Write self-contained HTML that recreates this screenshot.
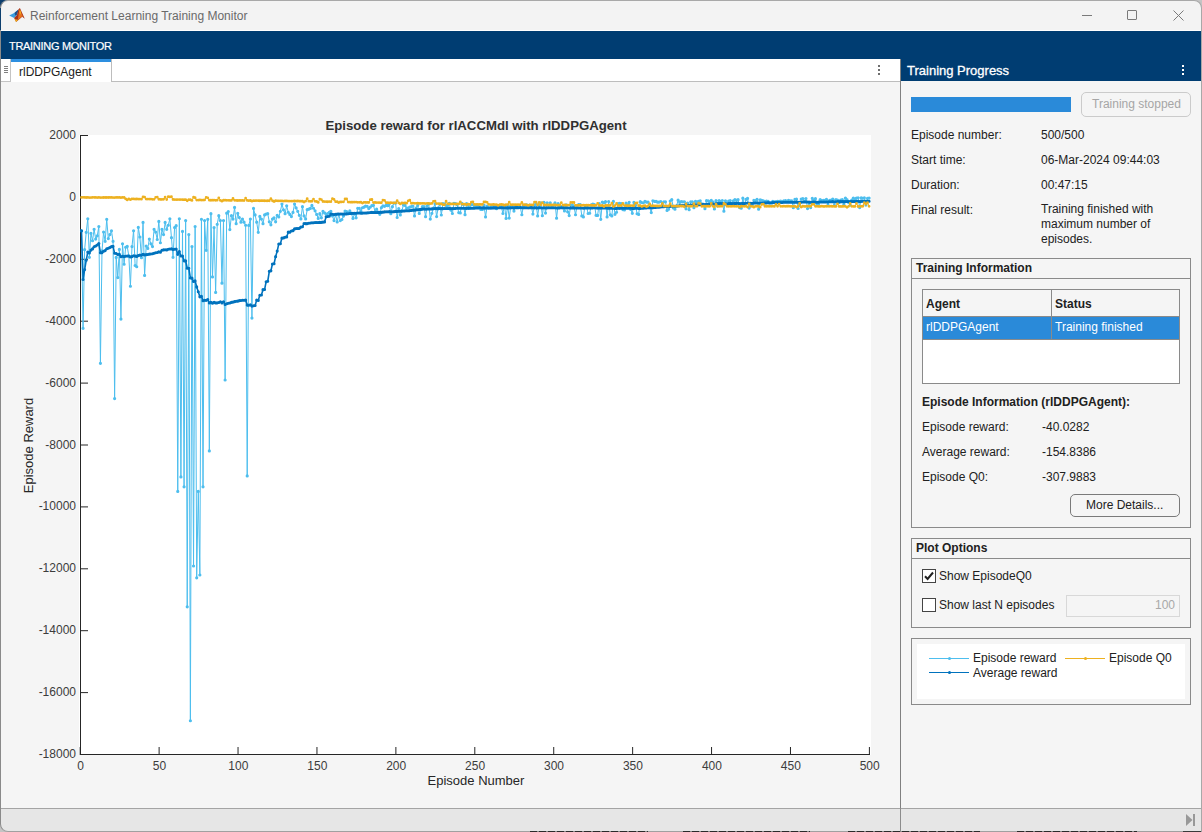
<!DOCTYPE html>
<html><head><meta charset="utf-8">
<style>
*{margin:0;padding:0;box-sizing:border-box}
html,body{width:1202px;height:832px;overflow:hidden;background:#f3f3f3;font-family:"Liberation Sans",sans-serif;color:#212121}
.a{position:absolute;white-space:nowrap}
#titlebar{position:absolute;left:0;top:0;width:1202px;height:31px;background:#f3f3f3}
#tstrip{position:absolute;left:1px;top:31px;width:1200px;height:28px;background:#003d72}
.lbl{position:absolute;font-size:12px;line-height:14px;color:#212121;white-space:nowrap}
</style></head><body>
<!-- window frame -->
<div class="a" style="left:0;top:0;width:1202px;height:832px;background:#c4c4c4"></div>
<div class="a" style="left:0;top:0;width:12px;height:30px;background:#0d3f6e"></div>
<div class="a" style="left:0;top:0;width:1202px;height:832px;background:#f3f3f3;border:1px solid #a8a8a8;border-left-color:#8a8a8a;border-radius:8px 8px 0 0"></div>
<div class="a" style="left:0;top:8px;width:1px;height:22px;background:#0d3f6e"></div>
<!-- title -->
<svg class="a" style="left:8px;top:7px" width="18" height="16" viewBox="0 0 18 16">
 <polygon points="1.2,8.5 6.6,5.7 10.4,2.5 9,8 6.1,10.9" fill="#3a9ee0"/>
 <polygon points="6.6,5.7 10.4,2.5 9.2,7.6 7.2,8.4" fill="#1f4f8a"/>
 <polygon points="10.4,2.5 11.9,1 16.8,11.7 14.2,9.7 8.1,14.9 6.1,10.9 9,8" fill="#a8321a"/>
 <polygon points="11.9,2.5 15.2,10.2 14,9.6 9.8,13.2 10.6,7" fill="#e5701f"/>
 <polygon points="11.9,2.2 13.2,6 12.2,7.4 11.3,4.8" fill="#f4ad22"/>
 <polygon points="6.6,12.2 8.1,14.9 10,12.8 8.4,12.4" fill="#f4b51e"/>
</svg>
<div class="a" style="left:30px;top:9px;font-size:12px;line-height:14px;color:#6a6a6a">Reinforcement Learning Training Monitor</div>
<!-- window controls -->
<div class="a" style="left:1082px;top:15px;width:10px;height:1px;background:#7a7a7a"></div>
<div class="a" style="left:1127px;top:10px;width:10px;height:10px;border:1px solid #7a7a7a;border-radius:1px"></div>
<svg class="a" style="left:1173px;top:10px" width="11" height="11" viewBox="0 0 11 11"><path d="M0.5 0.5L10.5 10.5M10.5 0.5L0.5 10.5" stroke="#7a7a7a" stroke-width="1"/></svg>
<!-- toolstrip -->
<div class="a" style="left:1px;top:30px;width:1200px;height:1px;background:#ffffff"></div>
<div class="a" style="left:1px;top:31px;width:1200px;height:28px;background:#003d72"></div>
<div class="a" style="left:9px;top:40px;font-size:11px;line-height:13px;letter-spacing:-0.3px;color:#fff;-webkit-text-stroke:0.2px #fff">TRAINING MONITOR</div>

<!-- left doc area -->
<div class="a" style="left:1px;top:82px;width:899px;height:726px;background:#f5f5f5"></div>
<div class="a" style="left:1px;top:59px;width:899px;height:23px;background:#fff"></div>
<div class="a" style="left:111px;top:81px;width:789px;height:1px;background:#bdbdbd"></div>
<div class="a" style="left:111px;top:59px;width:1px;height:23px;background:#bdbdbd"></div>
<div class="a" style="left:1px;top:59px;width:10px;height:23px;background:#fff;border-right:1px solid #c4c4c4;border-bottom:1px solid #c4c4c4"></div>
<div class="a" style="left:4px;top:66px;width:4px;height:1px;background:#808080"></div>
<div class="a" style="left:4px;top:68px;width:4px;height:1px;background:#808080"></div>
<div class="a" style="left:4px;top:70px;width:4px;height:1px;background:#808080"></div>
<div class="a" style="left:4px;top:72px;width:4px;height:1px;background:#808080"></div>
<div class="a" style="left:11px;top:59px;width:100px;height:3px;background:#2d8fe0"></div>
<div class="a" style="left:19px;top:65px;font-size:12px;line-height:14px;color:#212121">rlDDPGAgent</div>
<div class="a" style="left:878px;top:65px;width:2px;height:2px;background:#6e6e6e"></div>
<div class="a" style="left:878px;top:69px;width:2px;height:2px;background:#6e6e6e"></div>
<div class="a" style="left:878px;top:73px;width:2px;height:2px;background:#6e6e6e"></div>
<div class="a" style="left:900px;top:59px;width:1px;height:772px;background:#808080"></div>

<svg class="a" style="left:0;top:0" width="1202" height="832" viewBox="0 0 1202 832">
<rect x="79" y="135" width="792" height="620" fill="#fff"/>
<path d="M80.5 135 V755 M80 754.5 H870 M80 135.50 h8 M80 197.40 h8 M80 259.30 h8 M80 321.20 h8 M80 383.10 h8 M80 445.00 h8 M80 506.90 h8 M80 568.80 h8 M80 630.70 h8 M80 692.60 h8 M80 754.50 h8 M80.20 755 v-8 M159.12 755 v-8 M238.04 755 v-8 M316.96 755 v-8 M395.88 755 v-8 M474.80 755 v-8 M553.72 755 v-8 M632.64 755 v-8 M711.56 755 v-8 M790.48 755 v-8 M869.40 755 v-8" stroke="#262626" stroke-width="1" fill="none"/>
<g fill="none" stroke-linejoin="round">
<path d="M81.48 230.83 L83.06 328.32 L84.64 249.71 L86.21 232.37 L87.79 218.76 L89.37 257.29 L90.95 233.30 L92.53 240.73 L94.11 229.28 L95.68 239.03 L97.26 235.78 L98.84 226.49 L100.42 363.29 L102.00 250.94 L103.58 232.06 L105.15 241.35 L106.73 219.37 L108.31 238.56 L109.89 234.54 L111.47 230.83 L113.05 241.35 L114.62 398.57 L116.20 257.44 L117.78 277.56 L119.36 249.40 L120.94 319.03 L122.52 243.82 L124.10 264.25 L125.67 247.23 L127.25 246.46 L128.83 256.20 L130.41 286.23 L131.99 246.61 L133.57 230.83 L135.14 265.49 L136.72 266.73 L138.30 227.42 L139.88 237.02 L141.46 257.75 L143.04 222.47 L144.61 275.39 L146.19 245.99 L147.77 248.47 L149.35 239.03 L150.93 243.82 L152.51 246.61 L154.08 229.28 L155.66 232.06 L157.24 239.49 L158.82 221.39 L160.40 242.74 L161.98 229.28 L163.56 234.54 L165.13 222.47 L166.71 229.28 L168.29 225.25 L169.87 218.76 L171.45 237.63 L173.03 257.29 L174.60 227.58 L176.18 225.72 L177.76 491.42 L179.34 218.76 L180.92 476.88 L182.50 231.44 L184.07 486.78 L185.65 220.61 L187.23 606.87 L188.81 234.54 L190.39 720.76 L191.97 246.61 L193.54 566.01 L195.12 226.49 L196.70 577.78 L198.28 491.42 L199.86 574.99 L201.44 219.37 L203.02 486.78 L204.59 220.61 L206.17 250.32 L207.75 219.37 L209.33 450.88 L210.91 213.65 L212.49 276.94 L214.06 227.58 L215.64 292.42 L217.22 224.33 L218.80 215.66 L220.38 220.61 L221.96 283.13 L223.53 220.61 L225.11 380.00 L226.69 213.18 L228.27 211.48 L229.85 229.59 L231.43 215.66 L233.00 219.06 L234.58 207.46 L236.16 223.71 L237.74 213.34 L239.32 217.52 L240.90 222.16 L242.48 219.06 L244.05 222.16 L245.63 225.25 L247.21 475.95 L248.79 225.41 L250.37 219.06 L251.95 318.11 L253.52 208.39 L255.10 214.89 L256.68 222.16 L258.26 232.37 L259.84 216.43 L261.42 219.06 L262.99 223.71 L264.57 214.89 L266.15 214.11 L267.73 213.65 L269.31 221.85 L270.89 224.79 L272.46 219.06 L274.04 217.83 L275.62 221.85 L277.20 215.35 L278.78 216.90 L280.36 211.33 L281.94 204.05 L283.51 209.78 L285.09 213.65 L286.67 205.76 L288.25 212.26 L289.83 214.42 L291.41 216.59 L292.98 212.41 L294.56 204.05 L296.14 207.92 L297.72 211.33 L299.30 215.35 L300.88 218.91 L302.45 206.69 L304.03 215.97 L305.61 218.91 L307.19 209.63 L308.77 209.16 L310.35 208.39 L311.92 205.45 L313.50 208.23 L315.08 210.86 L316.66 214.42 L318.24 218.45 L319.82 213.65 L321.40 217.83 L322.97 211.33 L324.55 212.88 L326.13 214.27 L327.71 213.49 L329.29 212.41 L330.87 211.33 L332.44 215.97 L334.02 220.61 L335.60 214.92 L337.18 222.01 L338.76 214.29 L340.34 220.56 L341.91 219.52 L343.49 216.09 L345.07 211.11 L346.65 211.54 L348.23 213.00 L349.81 210.89 L351.38 213.52 L352.96 218.45 L354.54 213.64 L356.12 217.83 L357.70 208.26 L359.28 208.36 L360.86 211.11 L362.43 207.74 L364.01 207.18 L365.59 206.04 L367.17 206.25 L368.75 208.53 L370.33 207.03 L371.90 205.60 L373.48 205.36 L375.06 211.91 L376.64 209.13 L378.22 212.43 L379.80 214.31 L381.37 207.65 L382.95 205.84 L384.53 206.31 L386.11 205.39 L387.69 205.70 L389.27 203.86 L390.84 213.75 L392.42 206.68 L394.00 203.01 L395.58 203.10 L397.16 217.52 L398.74 208.58 L400.32 214.91 L401.89 210.61 L403.47 204.95 L405.05 205.46 L406.63 208.17 L408.21 207.98 L409.79 207.19 L411.36 206.55 L412.94 206.22 L414.52 215.97 L416.10 208.07 L417.68 205.39 L419.26 213.38 L420.83 209.60 L422.41 206.64 L423.99 206.54 L425.57 216.63 L427.15 205.84 L428.73 203.96 L430.30 219.06 L431.88 213.32 L433.46 208.05 L435.04 203.76 L436.62 216.59 L438.20 207.85 L439.78 204.03 L441.35 214.99 L442.93 203.52 L444.51 203.85 L446.09 205.49 L447.67 205.39 L449.25 203.34 L450.82 210.11 L452.40 213.49 L453.98 203.25 L455.56 203.53 L457.14 204.76 L458.72 212.53 L460.29 212.88 L461.87 203.43 L463.45 204.57 L465.03 214.66 L466.61 203.65 L468.19 205.42 L469.76 208.08 L471.34 204.58 L472.92 204.60 L474.50 206.18 L476.08 205.75 L477.66 205.63 L479.24 207.02 L480.81 209.42 L482.39 209.40 L483.97 205.06 L485.55 216.90 L487.13 206.12 L488.71 208.10 L490.28 207.57 L491.86 205.85 L493.44 206.52 L495.02 206.38 L496.60 208.74 L498.18 206.02 L499.75 206.99 L501.33 206.63 L502.91 213.49 L504.49 205.44 L506.07 218.46 L507.65 205.39 L509.22 218.04 L510.80 205.89 L512.38 206.30 L513.96 211.10 L515.54 206.41 L517.12 207.02 L518.70 207.47 L520.27 207.33 L521.85 214.73 L523.43 205.67 L525.01 205.17 L526.59 204.82 L528.17 206.79 L529.74 204.98 L531.32 206.11 L532.90 214.11 L534.48 205.37 L536.06 203.47 L537.64 215.97 L539.21 205.52 L540.79 202.76 L542.37 215.66 L543.95 202.47 L545.53 213.07 L547.11 202.73 L548.68 205.48 L550.26 202.73 L551.84 206.70 L553.42 204.98 L555.00 202.79 L556.58 218.14 L558.16 203.65 L559.73 206.64 L561.31 206.61 L562.89 206.92 L564.47 210.91 L566.05 204.88 L567.63 211.80 L569.20 215.58 L570.78 204.89 L572.36 204.87 L573.94 206.43 L575.52 214.73 L577.10 205.75 L578.67 204.58 L580.25 204.51 L581.83 215.97 L583.41 216.90 L584.99 205.30 L586.57 206.67 L588.14 213.49 L589.72 213.27 L591.30 204.84 L592.88 204.06 L594.46 204.48 L596.04 215.35 L597.62 215.40 L599.19 203.61 L600.77 219.37 L602.35 201.99 L603.93 202.80 L605.51 201.68 L607.09 216.90 L608.66 201.58 L610.24 214.81 L611.82 215.97 L613.40 201.38 L614.98 214.35 L616.56 212.26 L618.13 203.49 L619.71 203.37 L621.29 203.71 L622.87 209.57 L624.45 210.02 L626.03 203.14 L627.60 204.75 L629.18 202.23 L630.76 209.42 L632.34 213.32 L633.92 202.44 L635.50 205.22 L637.08 213.75 L638.65 214.42 L640.23 201.72 L641.81 202.50 L643.39 202.73 L644.97 201.31 L646.55 202.22 L648.12 202.14 L649.70 207.49 L651.28 212.58 L652.86 200.77 L654.44 201.32 L656.02 201.44 L657.59 202.15 L659.17 202.05 L660.75 201.52 L662.33 205.91 L663.91 201.81 L665.49 201.84 L667.06 210.40 L668.64 209.16 L670.22 201.00 L671.80 199.72 L673.38 207.96 L674.96 209.15 L676.54 206.07 L678.11 200.13 L679.69 202.38 L681.27 201.56 L682.85 201.87 L684.43 201.73 L686.01 208.82 L687.58 203.09 L689.16 209.64 L690.74 201.77 L692.32 201.74 L693.90 207.75 L695.48 201.39 L697.05 201.92 L698.63 201.29 L700.21 200.82 L701.79 203.74 L703.37 205.69 L704.95 208.66 L706.52 200.64 L708.10 200.95 L709.68 202.15 L711.26 200.31 L712.84 201.87 L714.42 208.98 L716.00 200.71 L717.57 206.00 L719.15 200.71 L720.73 201.80 L722.31 200.61 L723.89 211.17 L725.47 200.73 L727.04 204.63 L728.62 201.15 L730.20 200.56 L731.78 204.14 L733.36 200.82 L734.94 199.72 L736.51 200.39 L738.09 199.70 L739.67 207.77 L741.25 208.13 L742.83 198.16 L744.41 204.91 L745.98 199.41 L747.56 198.41 L749.14 208.07 L750.72 205.75 L752.30 205.74 L753.88 200.26 L755.46 200.73 L757.03 199.46 L758.61 209.16 L760.19 199.92 L761.77 200.25 L763.35 200.82 L764.93 201.60 L766.50 201.14 L768.08 201.28 L769.66 203.12 L771.24 202.97 L772.82 201.35 L774.40 201.97 L775.97 201.71 L777.55 201.31 L779.13 201.26 L780.71 201.01 L782.29 201.53 L783.87 200.90 L785.44 200.66 L787.02 201.06 L788.60 200.30 L790.18 200.89 L791.76 200.91 L793.34 207.74 L794.92 199.36 L796.49 199.22 L798.07 208.38 L799.65 205.36 L801.23 199.09 L802.81 198.61 L804.39 201.38 L805.96 198.48 L807.54 208.54 L809.12 202.75 L810.70 207.62 L812.28 198.35 L813.86 200.53 L815.43 198.70 L817.01 204.64 L818.59 204.29 L820.17 199.56 L821.75 200.51 L823.33 200.42 L824.90 200.29 L826.48 199.39 L828.06 205.13 L829.64 200.29 L831.22 200.21 L832.80 199.21 L834.38 205.40 L835.95 199.60 L837.53 200.00 L839.11 202.57 L840.69 200.10 L842.27 199.54 L843.85 204.42 L845.42 198.07 L847.00 199.67 L848.58 202.40 L850.16 205.05 L851.74 200.16 L853.32 198.03 L854.89 199.41 L856.47 198.03 L858.05 197.76 L859.63 207.55 L861.21 197.83 L862.79 198.24 L864.36 197.85 L865.94 205.07 L867.52 198.29 L869.10 198.09" stroke="#4dbeee" stroke-width="1"/>
<path d="M81.48 230.83h0M83.06 328.32h0M84.64 249.71h0M86.21 232.37h0M87.79 218.76h0M89.37 257.29h0M90.95 233.30h0M92.53 240.73h0M94.11 229.28h0M95.68 239.03h0M97.26 235.78h0M98.84 226.49h0M100.42 363.29h0M102.00 250.94h0M103.58 232.06h0M105.15 241.35h0M106.73 219.37h0M108.31 238.56h0M109.89 234.54h0M111.47 230.83h0M113.05 241.35h0M114.62 398.57h0M116.20 257.44h0M117.78 277.56h0M119.36 249.40h0M120.94 319.03h0M122.52 243.82h0M124.10 264.25h0M125.67 247.23h0M127.25 246.46h0M128.83 256.20h0M130.41 286.23h0M131.99 246.61h0M133.57 230.83h0M135.14 265.49h0M136.72 266.73h0M138.30 227.42h0M139.88 237.02h0M141.46 257.75h0M143.04 222.47h0M144.61 275.39h0M146.19 245.99h0M147.77 248.47h0M149.35 239.03h0M150.93 243.82h0M152.51 246.61h0M154.08 229.28h0M155.66 232.06h0M157.24 239.49h0M158.82 221.39h0M160.40 242.74h0M161.98 229.28h0M163.56 234.54h0M165.13 222.47h0M166.71 229.28h0M168.29 225.25h0M169.87 218.76h0M171.45 237.63h0M173.03 257.29h0M174.60 227.58h0M176.18 225.72h0M177.76 491.42h0M179.34 218.76h0M180.92 476.88h0M182.50 231.44h0M184.07 486.78h0M185.65 220.61h0M187.23 606.87h0M188.81 234.54h0M190.39 720.76h0M191.97 246.61h0M193.54 566.01h0M195.12 226.49h0M196.70 577.78h0M198.28 491.42h0M199.86 574.99h0M201.44 219.37h0M203.02 486.78h0M204.59 220.61h0M206.17 250.32h0M207.75 219.37h0M209.33 450.88h0M210.91 213.65h0M212.49 276.94h0M214.06 227.58h0M215.64 292.42h0M217.22 224.33h0M218.80 215.66h0M220.38 220.61h0M221.96 283.13h0M223.53 220.61h0M225.11 380.00h0M226.69 213.18h0M228.27 211.48h0M229.85 229.59h0M231.43 215.66h0M233.00 219.06h0M234.58 207.46h0M236.16 223.71h0M237.74 213.34h0M239.32 217.52h0M240.90 222.16h0M242.48 219.06h0M244.05 222.16h0M245.63 225.25h0M247.21 475.95h0M248.79 225.41h0M250.37 219.06h0M251.95 318.11h0M253.52 208.39h0M255.10 214.89h0M256.68 222.16h0M258.26 232.37h0M259.84 216.43h0M261.42 219.06h0M262.99 223.71h0M264.57 214.89h0M266.15 214.11h0M267.73 213.65h0M269.31 221.85h0M270.89 224.79h0M272.46 219.06h0M274.04 217.83h0M275.62 221.85h0M277.20 215.35h0M278.78 216.90h0M280.36 211.33h0M281.94 204.05h0M283.51 209.78h0M285.09 213.65h0M286.67 205.76h0M288.25 212.26h0M289.83 214.42h0M291.41 216.59h0M292.98 212.41h0M294.56 204.05h0M296.14 207.92h0M297.72 211.33h0M299.30 215.35h0M300.88 218.91h0M302.45 206.69h0M304.03 215.97h0M305.61 218.91h0M307.19 209.63h0M308.77 209.16h0M310.35 208.39h0M311.92 205.45h0M313.50 208.23h0M315.08 210.86h0M316.66 214.42h0M318.24 218.45h0M319.82 213.65h0M321.40 217.83h0M322.97 211.33h0M324.55 212.88h0M326.13 214.27h0M327.71 213.49h0M329.29 212.41h0M330.87 211.33h0M332.44 215.97h0M334.02 220.61h0M335.60 214.92h0M337.18 222.01h0M338.76 214.29h0M340.34 220.56h0M341.91 219.52h0M343.49 216.09h0M345.07 211.11h0M346.65 211.54h0M348.23 213.00h0M349.81 210.89h0M351.38 213.52h0M352.96 218.45h0M354.54 213.64h0M356.12 217.83h0M357.70 208.26h0M359.28 208.36h0M360.86 211.11h0M362.43 207.74h0M364.01 207.18h0M365.59 206.04h0M367.17 206.25h0M368.75 208.53h0M370.33 207.03h0M371.90 205.60h0M373.48 205.36h0M375.06 211.91h0M376.64 209.13h0M378.22 212.43h0M379.80 214.31h0M381.37 207.65h0M382.95 205.84h0M384.53 206.31h0M386.11 205.39h0M387.69 205.70h0M389.27 203.86h0M390.84 213.75h0M392.42 206.68h0M394.00 203.01h0M395.58 203.10h0M397.16 217.52h0M398.74 208.58h0M400.32 214.91h0M401.89 210.61h0M403.47 204.95h0M405.05 205.46h0M406.63 208.17h0M408.21 207.98h0M409.79 207.19h0M411.36 206.55h0M412.94 206.22h0M414.52 215.97h0M416.10 208.07h0M417.68 205.39h0M419.26 213.38h0M420.83 209.60h0M422.41 206.64h0M423.99 206.54h0M425.57 216.63h0M427.15 205.84h0M428.73 203.96h0M430.30 219.06h0M431.88 213.32h0M433.46 208.05h0M435.04 203.76h0M436.62 216.59h0M438.20 207.85h0M439.78 204.03h0M441.35 214.99h0M442.93 203.52h0M444.51 203.85h0M446.09 205.49h0M447.67 205.39h0M449.25 203.34h0M450.82 210.11h0M452.40 213.49h0M453.98 203.25h0M455.56 203.53h0M457.14 204.76h0M458.72 212.53h0M460.29 212.88h0M461.87 203.43h0M463.45 204.57h0M465.03 214.66h0M466.61 203.65h0M468.19 205.42h0M469.76 208.08h0M471.34 204.58h0M472.92 204.60h0M474.50 206.18h0M476.08 205.75h0M477.66 205.63h0M479.24 207.02h0M480.81 209.42h0M482.39 209.40h0M483.97 205.06h0M485.55 216.90h0M487.13 206.12h0M488.71 208.10h0M490.28 207.57h0M491.86 205.85h0M493.44 206.52h0M495.02 206.38h0M496.60 208.74h0M498.18 206.02h0M499.75 206.99h0M501.33 206.63h0M502.91 213.49h0M504.49 205.44h0M506.07 218.46h0M507.65 205.39h0M509.22 218.04h0M510.80 205.89h0M512.38 206.30h0M513.96 211.10h0M515.54 206.41h0M517.12 207.02h0M518.70 207.47h0M520.27 207.33h0M521.85 214.73h0M523.43 205.67h0M525.01 205.17h0M526.59 204.82h0M528.17 206.79h0M529.74 204.98h0M531.32 206.11h0M532.90 214.11h0M534.48 205.37h0M536.06 203.47h0M537.64 215.97h0M539.21 205.52h0M540.79 202.76h0M542.37 215.66h0M543.95 202.47h0M545.53 213.07h0M547.11 202.73h0M548.68 205.48h0M550.26 202.73h0M551.84 206.70h0M553.42 204.98h0M555.00 202.79h0M556.58 218.14h0M558.16 203.65h0M559.73 206.64h0M561.31 206.61h0M562.89 206.92h0M564.47 210.91h0M566.05 204.88h0M567.63 211.80h0M569.20 215.58h0M570.78 204.89h0M572.36 204.87h0M573.94 206.43h0M575.52 214.73h0M577.10 205.75h0M578.67 204.58h0M580.25 204.51h0M581.83 215.97h0M583.41 216.90h0M584.99 205.30h0M586.57 206.67h0M588.14 213.49h0M589.72 213.27h0M591.30 204.84h0M592.88 204.06h0M594.46 204.48h0M596.04 215.35h0M597.62 215.40h0M599.19 203.61h0M600.77 219.37h0M602.35 201.99h0M603.93 202.80h0M605.51 201.68h0M607.09 216.90h0M608.66 201.58h0M610.24 214.81h0M611.82 215.97h0M613.40 201.38h0M614.98 214.35h0M616.56 212.26h0M618.13 203.49h0M619.71 203.37h0M621.29 203.71h0M622.87 209.57h0M624.45 210.02h0M626.03 203.14h0M627.60 204.75h0M629.18 202.23h0M630.76 209.42h0M632.34 213.32h0M633.92 202.44h0M635.50 205.22h0M637.08 213.75h0M638.65 214.42h0M640.23 201.72h0M641.81 202.50h0M643.39 202.73h0M644.97 201.31h0M646.55 202.22h0M648.12 202.14h0M649.70 207.49h0M651.28 212.58h0M652.86 200.77h0M654.44 201.32h0M656.02 201.44h0M657.59 202.15h0M659.17 202.05h0M660.75 201.52h0M662.33 205.91h0M663.91 201.81h0M665.49 201.84h0M667.06 210.40h0M668.64 209.16h0M670.22 201.00h0M671.80 199.72h0M673.38 207.96h0M674.96 209.15h0M676.54 206.07h0M678.11 200.13h0M679.69 202.38h0M681.27 201.56h0M682.85 201.87h0M684.43 201.73h0M686.01 208.82h0M687.58 203.09h0M689.16 209.64h0M690.74 201.77h0M692.32 201.74h0M693.90 207.75h0M695.48 201.39h0M697.05 201.92h0M698.63 201.29h0M700.21 200.82h0M701.79 203.74h0M703.37 205.69h0M704.95 208.66h0M706.52 200.64h0M708.10 200.95h0M709.68 202.15h0M711.26 200.31h0M712.84 201.87h0M714.42 208.98h0M716.00 200.71h0M717.57 206.00h0M719.15 200.71h0M720.73 201.80h0M722.31 200.61h0M723.89 211.17h0M725.47 200.73h0M727.04 204.63h0M728.62 201.15h0M730.20 200.56h0M731.78 204.14h0M733.36 200.82h0M734.94 199.72h0M736.51 200.39h0M738.09 199.70h0M739.67 207.77h0M741.25 208.13h0M742.83 198.16h0M744.41 204.91h0M745.98 199.41h0M747.56 198.41h0M749.14 208.07h0M750.72 205.75h0M752.30 205.74h0M753.88 200.26h0M755.46 200.73h0M757.03 199.46h0M758.61 209.16h0M760.19 199.92h0M761.77 200.25h0M763.35 200.82h0M764.93 201.60h0M766.50 201.14h0M768.08 201.28h0M769.66 203.12h0M771.24 202.97h0M772.82 201.35h0M774.40 201.97h0M775.97 201.71h0M777.55 201.31h0M779.13 201.26h0M780.71 201.01h0M782.29 201.53h0M783.87 200.90h0M785.44 200.66h0M787.02 201.06h0M788.60 200.30h0M790.18 200.89h0M791.76 200.91h0M793.34 207.74h0M794.92 199.36h0M796.49 199.22h0M798.07 208.38h0M799.65 205.36h0M801.23 199.09h0M802.81 198.61h0M804.39 201.38h0M805.96 198.48h0M807.54 208.54h0M809.12 202.75h0M810.70 207.62h0M812.28 198.35h0M813.86 200.53h0M815.43 198.70h0M817.01 204.64h0M818.59 204.29h0M820.17 199.56h0M821.75 200.51h0M823.33 200.42h0M824.90 200.29h0M826.48 199.39h0M828.06 205.13h0M829.64 200.29h0M831.22 200.21h0M832.80 199.21h0M834.38 205.40h0M835.95 199.60h0M837.53 200.00h0M839.11 202.57h0M840.69 200.10h0M842.27 199.54h0M843.85 204.42h0M845.42 198.07h0M847.00 199.67h0M848.58 202.40h0M850.16 205.05h0M851.74 200.16h0M853.32 198.03h0M854.89 199.41h0M856.47 198.03h0M858.05 197.76h0M859.63 207.55h0M861.21 197.83h0M862.79 198.24h0M864.36 197.85h0M865.94 205.07h0M867.52 198.29h0M869.10 198.09h0" stroke="#4dbeee" stroke-width="3.2" stroke-linecap="round"/>
<path d="M81.48 230.83 L83.06 279.57 L84.64 269.62 L86.21 260.31 L87.79 252.00 L89.37 252.88 L90.95 250.08 L92.53 248.91 L94.11 246.73 L95.68 245.96 L97.26 245.03 L98.84 243.49 L100.42 252.71 L102.00 252.58 L103.58 251.21 L105.15 250.60 L106.73 248.76 L108.31 248.19 L109.89 247.47 L111.47 246.64 L113.05 246.39 L114.62 253.31 L116.20 253.49 L117.78 254.49 L119.36 254.29 L120.94 256.78 L122.52 256.30 L124.10 256.58 L125.67 256.26 L127.25 255.93 L128.83 255.94 L130.41 256.89 L131.99 256.58 L133.57 255.82 L135.14 256.09 L136.72 256.39 L138.30 255.61 L139.88 255.12 L141.46 255.19 L143.04 254.37 L144.61 254.88 L146.19 254.67 L147.77 254.52 L149.35 254.17 L150.93 253.94 L152.51 253.78 L154.08 253.26 L155.66 252.82 L157.24 252.55 L158.82 251.92 L160.40 252.16 L161.98 250.18 L163.56 249.88 L165.13 249.68 L166.71 249.89 L168.29 249.25 L169.87 248.96 L171.45 248.90 L173.03 249.46 L174.60 249.23 L176.18 249.03 L177.76 254.33 L179.34 251.44 L180.92 255.95 L182.50 255.94 L184.07 260.85 L185.65 260.88 L187.23 268.24 L188.81 268.24 L190.39 278.04 L191.97 278.15 L193.54 281.49 L195.12 280.88 L196.70 286.88 L198.28 291.72 L199.86 296.84 L201.44 296.35 L203.02 300.80 L204.59 300.27 L206.17 300.35 L207.75 299.61 L209.33 302.90 L210.91 302.24 L212.49 303.17 L214.06 302.41 L215.64 302.92 L217.22 302.86 L218.80 302.43 L220.38 301.69 L221.96 302.90 L223.53 301.81 L225.11 304.49 L226.69 303.78 L228.27 303.23 L229.85 302.95 L231.43 302.33 L233.00 302.12 L234.58 301.63 L236.16 301.31 L237.74 301.15 L239.32 300.65 L240.90 300.51 L242.48 300.20 L244.05 300.19 L245.63 300.11 L247.21 305.12 L248.79 305.26 L250.37 304.89 L251.95 306.10 L253.52 305.72 L255.10 305.50 L256.68 300.12 L258.26 300.39 L259.84 295.18 L261.42 294.93 L262.99 289.67 L264.57 289.56 L266.15 281.70 L267.73 281.28 L269.31 271.31 L270.89 270.87 L272.46 263.93 L274.04 263.76 L275.62 256.64 L277.20 251.12 L278.78 243.95 L280.36 243.79 L281.94 238.14 L283.51 237.92 L285.09 237.19 L286.67 236.92 L288.25 232.14 L289.83 232.16 L291.41 230.95 L292.98 230.65 L294.56 228.88 L296.14 228.55 L297.72 228.47 L299.30 228.36 L300.88 227.08 L302.45 226.80 L304.03 223.52 L305.61 223.63 L307.19 223.60 L308.77 223.19 L310.35 223.04 L311.92 222.77 L313.50 222.79 L315.08 222.53 L316.66 222.55 L318.24 222.57 L319.82 222.40 L321.40 222.37 L322.97 222.16 L324.55 221.91 L326.13 216.68 L327.71 216.44 L329.29 216.30 L330.87 214.17 L332.44 214.32 L334.02 214.43 L335.60 214.29 L337.18 214.08 L338.76 214.04 L340.34 214.07 L341.91 213.99 L343.49 214.01 L345.07 213.95 L346.65 213.91 L348.23 213.73 L349.81 213.45 L351.38 213.34 L352.96 213.35 L354.54 213.19 L356.12 213.24 L357.70 213.07 L359.28 213.01 L360.86 213.15 L362.43 213.11 L364.01 212.98 L365.59 212.98 L367.17 212.86 L368.75 212.75 L370.33 212.55 L371.90 212.42 L373.48 212.44 L375.06 212.52 L376.64 212.48 L378.22 212.42 L379.80 212.33 L381.37 212.35 L382.95 212.15 L384.53 211.89 L386.11 211.81 L387.69 211.74 L389.27 211.65 L390.84 211.82 L392.42 211.79 L394.00 211.63 L395.58 211.40 L397.16 211.38 L398.74 211.28 L400.32 211.22 L401.89 211.21 L403.47 211.05 L405.05 210.87 L406.63 210.77 L408.21 210.68 L409.79 210.60 L411.36 210.41 L412.94 210.12 L414.52 210.14 L416.10 209.86 L417.68 209.68 L419.26 209.54 L420.83 209.34 L422.41 209.15 L423.99 209.06 L425.57 209.16 L427.15 209.02 L428.73 208.88 L430.30 208.99 L431.88 208.89 L433.46 208.78 L435.04 208.50 L436.62 208.66 L438.20 208.65 L439.78 208.51 L441.35 208.66 L442.93 208.58 L444.51 208.54 L446.09 208.53 L447.67 208.46 L449.25 208.39 L450.82 208.48 L452.40 208.64 L453.98 208.47 L455.56 208.36 L457.14 208.20 L458.72 208.17 L460.29 208.27 L461.87 208.22 L463.45 208.19 L465.03 208.37 L466.61 208.33 L468.19 208.36 L469.76 208.25 L471.34 208.21 L472.92 208.24 L474.50 208.30 L476.08 208.07 L477.66 208.01 L479.24 207.85 L480.81 207.83 L482.39 207.92 L483.97 207.91 L485.55 208.08 L487.13 208.04 L488.71 208.06 L490.28 208.08 L491.86 208.08 L493.44 207.89 L495.02 207.85 L496.60 207.92 L498.18 207.77 L499.75 207.72 L501.33 207.72 L502.91 207.86 L504.49 207.64 L506.07 207.89 L507.65 207.92 L509.22 207.90 L510.80 207.75 L512.38 207.71 L513.96 207.86 L515.54 207.66 L517.12 207.64 L518.70 207.71 L520.27 207.55 L521.85 207.78 L523.43 207.82 L525.01 207.81 L526.59 207.80 L528.17 207.87 L529.74 207.76 L531.32 207.62 L532.90 207.83 L534.48 207.87 L536.06 207.84 L537.64 207.91 L539.21 207.77 L540.79 207.75 L542.37 207.98 L543.95 207.73 L545.53 207.92 L547.11 207.87 L548.68 207.81 L550.26 207.78 L551.84 207.82 L553.42 207.80 L555.00 207.74 L556.58 207.99 L558.16 207.92 L559.73 207.86 L561.31 207.81 L562.89 207.84 L564.47 207.72 L566.05 207.70 L567.63 207.77 L569.20 207.93 L570.78 207.92 L572.36 207.88 L573.94 207.88 L575.52 208.00 L577.10 208.00 L578.67 207.95 L580.25 207.91 L581.83 207.96 L583.41 208.19 L584.99 207.92 L586.57 207.95 L588.14 207.86 L589.72 208.00 L591.30 207.98 L592.88 207.84 L594.46 207.80 L596.04 207.96 L597.62 208.12 L599.19 208.05 L600.77 208.14 L602.35 208.07 L603.93 208.02 L605.51 207.96 L607.09 208.16 L608.66 208.09 L610.24 208.26 L611.82 208.30 L613.40 208.22 L614.98 208.44 L616.56 208.36 L618.13 208.32 L619.71 208.34 L621.29 208.10 L622.87 208.24 L624.45 208.18 L626.03 208.19 L627.60 208.17 L629.18 208.16 L630.76 208.22 L632.34 208.38 L633.92 208.38 L635.50 208.12 L637.08 208.32 L638.65 208.48 L640.23 208.38 L641.81 208.29 L643.39 208.13 L644.97 208.05 L646.55 207.86 L648.12 207.59 L649.70 207.65 L651.28 207.80 L652.86 207.69 L654.44 207.42 L656.02 207.33 L657.59 207.28 L659.17 207.23 L660.75 206.95 L662.33 206.73 L663.91 206.66 L665.49 206.56 L667.06 206.50 L668.64 206.42 L670.22 206.34 L671.80 206.25 L673.38 206.32 L674.96 206.20 L676.54 206.01 L678.11 205.94 L679.69 205.60 L681.27 205.59 L682.85 205.57 L684.43 205.57 L686.01 205.41 L687.58 205.44 L689.16 205.34 L690.74 205.06 L692.32 205.06 L693.90 204.93 L695.48 204.71 L697.05 204.68 L698.63 204.64 L700.21 204.58 L701.79 204.47 L703.37 204.38 L704.95 204.49 L706.52 204.41 L708.10 204.38 L709.68 204.24 L711.26 203.98 L712.84 203.96 L714.42 204.04 L716.00 203.78 L717.57 203.61 L719.15 203.59 L720.73 203.58 L722.31 203.53 L723.89 203.73 L725.47 203.70 L727.04 203.75 L728.62 203.62 L730.20 203.38 L731.78 203.45 L733.36 203.44 L734.94 203.41 L736.51 203.37 L738.09 203.33 L739.67 203.45 L741.25 203.49 L742.83 203.42 L744.41 203.48 L745.98 203.26 L747.56 203.05 L749.14 203.19 L750.72 203.31 L752.30 203.27 L753.88 203.09 L755.46 202.98 L757.03 202.97 L758.61 203.10 L760.19 203.07 L761.77 203.04 L763.35 203.02 L764.93 202.88 L766.50 202.84 L768.08 202.67 L769.66 202.70 L771.24 202.72 L772.82 202.59 L774.40 202.60 L775.97 202.60 L777.55 202.60 L779.13 202.61 L780.71 202.55 L782.29 202.47 L783.87 202.32 L785.44 202.32 L787.02 202.32 L788.60 202.28 L790.18 202.29 L791.76 202.27 L793.34 202.25 L794.92 202.22 L796.49 202.09 L798.07 202.24 L799.65 202.31 L801.23 202.28 L802.81 202.03 L804.39 202.04 L805.96 201.92 L807.54 202.07 L809.12 202.11 L810.70 202.18 L812.28 202.13 L813.86 202.15 L815.43 202.11 L817.01 202.21 L818.59 202.14 L820.17 201.97 L821.75 202.02 L823.33 201.93 L824.90 201.95 L826.48 201.97 L828.06 201.91 L829.64 201.80 L831.22 201.69 L832.80 201.67 L834.38 201.76 L835.95 201.76 L837.53 201.58 L839.11 201.63 L840.69 201.63 L842.27 201.60 L843.85 201.66 L845.42 201.60 L847.00 201.57 L848.58 201.55 L850.16 201.59 L851.74 201.57 L853.32 201.49 L854.89 201.45 L856.47 201.38 L858.05 201.31 L859.63 201.44 L861.21 201.37 L862.79 201.31 L864.36 201.26 L865.94 201.34 L867.52 201.30 L869.10 201.24" stroke="#0072bd" stroke-width="1.6"/>
<path d="M81.48 230.83h0M83.06 279.57h0M84.64 269.62h0M86.21 260.31h0M87.79 252.00h0M89.37 252.88h0M90.95 250.08h0M92.53 248.91h0M94.11 246.73h0M95.68 245.96h0M97.26 245.03h0M98.84 243.49h0M100.42 252.71h0M102.00 252.58h0M103.58 251.21h0M105.15 250.60h0M106.73 248.76h0M108.31 248.19h0M109.89 247.47h0M111.47 246.64h0M113.05 246.39h0M114.62 253.31h0M116.20 253.49h0M117.78 254.49h0M119.36 254.29h0M120.94 256.78h0M122.52 256.30h0M124.10 256.58h0M125.67 256.26h0M127.25 255.93h0M128.83 255.94h0M130.41 256.89h0M131.99 256.58h0M133.57 255.82h0M135.14 256.09h0M136.72 256.39h0M138.30 255.61h0M139.88 255.12h0M141.46 255.19h0M143.04 254.37h0M144.61 254.88h0M146.19 254.67h0M147.77 254.52h0M149.35 254.17h0M150.93 253.94h0M152.51 253.78h0M154.08 253.26h0M155.66 252.82h0M157.24 252.55h0M158.82 251.92h0M160.40 252.16h0M161.98 250.18h0M163.56 249.88h0M165.13 249.68h0M166.71 249.89h0M168.29 249.25h0M169.87 248.96h0M171.45 248.90h0M173.03 249.46h0M174.60 249.23h0M176.18 249.03h0M177.76 254.33h0M179.34 251.44h0M180.92 255.95h0M182.50 255.94h0M184.07 260.85h0M185.65 260.88h0M187.23 268.24h0M188.81 268.24h0M190.39 278.04h0M191.97 278.15h0M193.54 281.49h0M195.12 280.88h0M196.70 286.88h0M198.28 291.72h0M199.86 296.84h0M201.44 296.35h0M203.02 300.80h0M204.59 300.27h0M206.17 300.35h0M207.75 299.61h0M209.33 302.90h0M210.91 302.24h0M212.49 303.17h0M214.06 302.41h0M215.64 302.92h0M217.22 302.86h0M218.80 302.43h0M220.38 301.69h0M221.96 302.90h0M223.53 301.81h0M225.11 304.49h0M226.69 303.78h0M228.27 303.23h0M229.85 302.95h0M231.43 302.33h0M233.00 302.12h0M234.58 301.63h0M236.16 301.31h0M237.74 301.15h0M239.32 300.65h0M240.90 300.51h0M242.48 300.20h0M244.05 300.19h0M245.63 300.11h0M247.21 305.12h0M248.79 305.26h0M250.37 304.89h0M251.95 306.10h0M253.52 305.72h0M255.10 305.50h0M256.68 300.12h0M258.26 300.39h0M259.84 295.18h0M261.42 294.93h0M262.99 289.67h0M264.57 289.56h0M266.15 281.70h0M267.73 281.28h0M269.31 271.31h0M270.89 270.87h0M272.46 263.93h0M274.04 263.76h0M275.62 256.64h0M277.20 251.12h0M278.78 243.95h0M280.36 243.79h0M281.94 238.14h0M283.51 237.92h0M285.09 237.19h0M286.67 236.92h0M288.25 232.14h0M289.83 232.16h0M291.41 230.95h0M292.98 230.65h0M294.56 228.88h0M296.14 228.55h0M297.72 228.47h0M299.30 228.36h0M300.88 227.08h0M302.45 226.80h0M304.03 223.52h0M305.61 223.63h0M307.19 223.60h0M308.77 223.19h0M310.35 223.04h0M311.92 222.77h0M313.50 222.79h0M315.08 222.53h0M316.66 222.55h0M318.24 222.57h0M319.82 222.40h0M321.40 222.37h0M322.97 222.16h0M324.55 221.91h0M326.13 216.68h0M327.71 216.44h0M329.29 216.30h0M330.87 214.17h0M332.44 214.32h0M334.02 214.43h0M335.60 214.29h0M337.18 214.08h0M338.76 214.04h0M340.34 214.07h0M341.91 213.99h0M343.49 214.01h0M345.07 213.95h0M346.65 213.91h0M348.23 213.73h0M349.81 213.45h0M351.38 213.34h0M352.96 213.35h0M354.54 213.19h0M356.12 213.24h0M357.70 213.07h0M359.28 213.01h0M360.86 213.15h0M362.43 213.11h0M364.01 212.98h0M365.59 212.98h0M367.17 212.86h0M368.75 212.75h0M370.33 212.55h0M371.90 212.42h0M373.48 212.44h0M375.06 212.52h0M376.64 212.48h0M378.22 212.42h0M379.80 212.33h0M381.37 212.35h0M382.95 212.15h0M384.53 211.89h0M386.11 211.81h0M387.69 211.74h0M389.27 211.65h0M390.84 211.82h0M392.42 211.79h0M394.00 211.63h0M395.58 211.40h0M397.16 211.38h0M398.74 211.28h0M400.32 211.22h0M401.89 211.21h0M403.47 211.05h0M405.05 210.87h0M406.63 210.77h0M408.21 210.68h0M409.79 210.60h0M411.36 210.41h0M412.94 210.12h0M414.52 210.14h0M416.10 209.86h0M417.68 209.68h0M419.26 209.54h0M420.83 209.34h0M422.41 209.15h0M423.99 209.06h0M425.57 209.16h0M427.15 209.02h0M428.73 208.88h0M430.30 208.99h0M431.88 208.89h0M433.46 208.78h0M435.04 208.50h0M436.62 208.66h0M438.20 208.65h0M439.78 208.51h0M441.35 208.66h0M442.93 208.58h0M444.51 208.54h0M446.09 208.53h0M447.67 208.46h0M449.25 208.39h0M450.82 208.48h0M452.40 208.64h0M453.98 208.47h0M455.56 208.36h0M457.14 208.20h0M458.72 208.17h0M460.29 208.27h0M461.87 208.22h0M463.45 208.19h0M465.03 208.37h0M466.61 208.33h0M468.19 208.36h0M469.76 208.25h0M471.34 208.21h0M472.92 208.24h0M474.50 208.30h0M476.08 208.07h0M477.66 208.01h0M479.24 207.85h0M480.81 207.83h0M482.39 207.92h0M483.97 207.91h0M485.55 208.08h0M487.13 208.04h0M488.71 208.06h0M490.28 208.08h0M491.86 208.08h0M493.44 207.89h0M495.02 207.85h0M496.60 207.92h0M498.18 207.77h0M499.75 207.72h0M501.33 207.72h0M502.91 207.86h0M504.49 207.64h0M506.07 207.89h0M507.65 207.92h0M509.22 207.90h0M510.80 207.75h0M512.38 207.71h0M513.96 207.86h0M515.54 207.66h0M517.12 207.64h0M518.70 207.71h0M520.27 207.55h0M521.85 207.78h0M523.43 207.82h0M525.01 207.81h0M526.59 207.80h0M528.17 207.87h0M529.74 207.76h0M531.32 207.62h0M532.90 207.83h0M534.48 207.87h0M536.06 207.84h0M537.64 207.91h0M539.21 207.77h0M540.79 207.75h0M542.37 207.98h0M543.95 207.73h0M545.53 207.92h0M547.11 207.87h0M548.68 207.81h0M550.26 207.78h0M551.84 207.82h0M553.42 207.80h0M555.00 207.74h0M556.58 207.99h0M558.16 207.92h0M559.73 207.86h0M561.31 207.81h0M562.89 207.84h0M564.47 207.72h0M566.05 207.70h0M567.63 207.77h0M569.20 207.93h0M570.78 207.92h0M572.36 207.88h0M573.94 207.88h0M575.52 208.00h0M577.10 208.00h0M578.67 207.95h0M580.25 207.91h0M581.83 207.96h0M583.41 208.19h0M584.99 207.92h0M586.57 207.95h0M588.14 207.86h0M589.72 208.00h0M591.30 207.98h0M592.88 207.84h0M594.46 207.80h0M596.04 207.96h0M597.62 208.12h0M599.19 208.05h0M600.77 208.14h0M602.35 208.07h0M603.93 208.02h0M605.51 207.96h0M607.09 208.16h0M608.66 208.09h0M610.24 208.26h0M611.82 208.30h0M613.40 208.22h0M614.98 208.44h0M616.56 208.36h0M618.13 208.32h0M619.71 208.34h0M621.29 208.10h0M622.87 208.24h0M624.45 208.18h0M626.03 208.19h0M627.60 208.17h0M629.18 208.16h0M630.76 208.22h0M632.34 208.38h0M633.92 208.38h0M635.50 208.12h0M637.08 208.32h0M638.65 208.48h0M640.23 208.38h0M641.81 208.29h0M643.39 208.13h0M644.97 208.05h0M646.55 207.86h0M648.12 207.59h0M649.70 207.65h0M651.28 207.80h0M652.86 207.69h0M654.44 207.42h0M656.02 207.33h0M657.59 207.28h0M659.17 207.23h0M660.75 206.95h0M662.33 206.73h0M663.91 206.66h0M665.49 206.56h0M667.06 206.50h0M668.64 206.42h0M670.22 206.34h0M671.80 206.25h0M673.38 206.32h0M674.96 206.20h0M676.54 206.01h0M678.11 205.94h0M679.69 205.60h0M681.27 205.59h0M682.85 205.57h0M684.43 205.57h0M686.01 205.41h0M687.58 205.44h0M689.16 205.34h0M690.74 205.06h0M692.32 205.06h0M693.90 204.93h0M695.48 204.71h0M697.05 204.68h0M698.63 204.64h0M700.21 204.58h0M701.79 204.47h0M703.37 204.38h0M704.95 204.49h0M706.52 204.41h0M708.10 204.38h0M709.68 204.24h0M711.26 203.98h0M712.84 203.96h0M714.42 204.04h0M716.00 203.78h0M717.57 203.61h0M719.15 203.59h0M720.73 203.58h0M722.31 203.53h0M723.89 203.73h0M725.47 203.70h0M727.04 203.75h0M728.62 203.62h0M730.20 203.38h0M731.78 203.45h0M733.36 203.44h0M734.94 203.41h0M736.51 203.37h0M738.09 203.33h0M739.67 203.45h0M741.25 203.49h0M742.83 203.42h0M744.41 203.48h0M745.98 203.26h0M747.56 203.05h0M749.14 203.19h0M750.72 203.31h0M752.30 203.27h0M753.88 203.09h0M755.46 202.98h0M757.03 202.97h0M758.61 203.10h0M760.19 203.07h0M761.77 203.04h0M763.35 203.02h0M764.93 202.88h0M766.50 202.84h0M768.08 202.67h0M769.66 202.70h0M771.24 202.72h0M772.82 202.59h0M774.40 202.60h0M775.97 202.60h0M777.55 202.60h0M779.13 202.61h0M780.71 202.55h0M782.29 202.47h0M783.87 202.32h0M785.44 202.32h0M787.02 202.32h0M788.60 202.28h0M790.18 202.29h0M791.76 202.27h0M793.34 202.25h0M794.92 202.22h0M796.49 202.09h0M798.07 202.24h0M799.65 202.31h0M801.23 202.28h0M802.81 202.03h0M804.39 202.04h0M805.96 201.92h0M807.54 202.07h0M809.12 202.11h0M810.70 202.18h0M812.28 202.13h0M813.86 202.15h0M815.43 202.11h0M817.01 202.21h0M818.59 202.14h0M820.17 201.97h0M821.75 202.02h0M823.33 201.93h0M824.90 201.95h0M826.48 201.97h0M828.06 201.91h0M829.64 201.80h0M831.22 201.69h0M832.80 201.67h0M834.38 201.76h0M835.95 201.76h0M837.53 201.58h0M839.11 201.63h0M840.69 201.63h0M842.27 201.60h0M843.85 201.66h0M845.42 201.60h0M847.00 201.57h0M848.58 201.55h0M850.16 201.59h0M851.74 201.57h0M853.32 201.49h0M854.89 201.45h0M856.47 201.38h0M858.05 201.31h0M859.63 201.44h0M861.21 201.37h0M862.79 201.31h0M864.36 201.26h0M865.94 201.34h0M867.52 201.30h0M869.10 201.24h0" stroke="#0072bd" stroke-width="3.1" stroke-linecap="round"/>
<path d="M81.48 197.42 L83.06 197.31 L84.64 197.41 L86.21 197.50 L87.79 197.40 L89.37 197.53 L90.95 197.54 L92.53 197.40 L94.11 197.33 L95.68 197.42 L97.26 197.55 L98.84 197.46 L100.42 197.55 L102.00 197.59 L103.58 197.50 L105.15 197.48 L106.73 197.49 L108.31 197.51 L109.89 197.38 L111.47 197.43 L113.05 197.56 L114.62 197.57 L116.20 197.46 L117.78 197.45 L119.36 197.42 L120.94 197.67 L122.52 197.45 L124.10 197.44 L125.67 198.90 L127.25 199.94 L128.83 198.78 L130.41 199.67 L131.99 198.88 L133.57 198.86 L135.14 199.04 L136.72 199.02 L138.30 199.04 L139.88 199.04 L141.46 199.14 L143.04 196.95 L144.61 197.08 L146.19 199.09 L147.77 199.03 L149.35 199.08 L150.93 199.09 L152.51 199.29 L154.08 199.32 L155.66 197.34 L157.24 197.04 L158.82 199.24 L160.40 199.42 L161.98 199.43 L163.56 199.36 L165.13 197.15 L166.71 199.55 L168.29 196.63 L169.87 196.88 L171.45 196.76 L173.03 199.49 L174.60 199.53 L176.18 199.64 L177.76 199.61 L179.34 199.59 L180.92 199.57 L182.50 199.60 L184.07 199.65 L185.65 199.72 L187.23 200.83 L188.81 199.70 L190.39 199.77 L191.97 200.40 L193.54 197.24 L195.12 197.77 L196.70 200.05 L198.28 200.03 L199.86 199.94 L201.44 200.05 L203.02 200.05 L204.59 199.96 L206.17 197.36 L207.75 197.86 L209.33 200.22 L210.91 200.23 L212.49 200.19 L214.06 200.08 L215.64 200.33 L217.22 200.18 L218.80 197.83 L220.38 200.39 L221.96 201.20 L223.53 200.27 L225.11 200.20 L226.69 200.34 L228.27 200.36 L229.85 200.42 L231.43 200.38 L233.00 198.48 L234.58 200.31 L236.16 200.45 L237.74 200.48 L239.32 200.39 L240.90 200.45 L242.48 200.42 L244.05 200.59 L245.63 198.21 L247.21 200.45 L248.79 200.67 L250.37 200.52 L251.95 201.22 L253.52 200.66 L255.10 200.72 L256.68 200.57 L258.26 200.67 L259.84 200.75 L261.42 200.64 L262.99 200.63 L264.57 200.76 L266.15 200.82 L267.73 200.76 L269.31 200.77 L270.89 198.62 L272.46 200.74 L274.04 201.60 L275.62 200.74 L277.20 200.87 L278.78 200.80 L280.36 200.94 L281.94 200.81 L283.51 201.05 L285.09 200.90 L286.67 200.94 L288.25 201.07 L289.83 201.07 L291.41 201.05 L292.98 201.12 L294.56 201.01 L296.14 201.04 L297.72 201.02 L299.30 201.14 L300.88 201.18 L302.45 201.23 L304.03 202.05 L305.61 201.13 L307.19 198.59 L308.77 201.16 L310.35 201.29 L311.92 201.27 L313.50 199.03 L315.08 201.36 L316.66 201.48 L318.24 202.39 L319.82 199.12 L321.40 199.62 L322.97 201.48 L324.55 201.57 L326.13 201.66 L327.71 201.74 L329.29 201.60 L330.87 201.70 L332.44 198.74 L334.02 199.38 L335.60 201.67 L337.18 201.73 L338.76 202.60 L340.34 201.97 L341.91 201.85 L343.49 201.87 L345.07 198.98 L346.65 199.02 L348.23 202.12 L349.81 202.09 L351.38 202.13 L352.96 202.15 L354.54 202.12 L356.12 202.03 L357.70 202.28 L359.28 202.32 L360.86 202.24 L362.43 203.05 L364.01 202.29 L365.59 202.38 L367.17 202.41 L368.75 202.50 L370.33 199.67 L371.90 199.50 L373.48 202.58 L375.06 202.51 L376.64 202.53 L378.22 202.57 L379.80 202.57 L381.37 202.63 L382.95 200.06 L384.53 200.38 L386.11 202.64 L387.69 202.63 L389.27 202.86 L390.84 202.77 L392.42 202.78 L394.00 202.82 L395.58 202.95 L397.16 200.67 L398.74 202.96 L400.32 203.90 L401.89 202.99 L403.47 203.04 L405.05 203.00 L406.63 203.19 L408.21 200.92 L409.79 200.15 L411.36 203.23 L412.94 203.11 L414.52 203.34 L416.10 203.37 L417.68 203.25 L419.26 203.43 L420.83 203.46 L422.41 203.34 L423.99 203.45 L425.57 203.54 L427.15 203.37 L428.73 203.52 L430.30 203.58 L431.88 203.47 L433.46 201.35 L435.04 201.26 L436.62 203.57 L438.20 203.62 L439.78 203.83 L441.35 203.73 L442.93 204.68 L444.51 204.94 L446.09 201.27 L447.67 203.82 L449.25 203.83 L450.82 203.95 L452.40 203.91 L453.98 203.92 L455.56 204.03 L457.14 203.95 L458.72 203.97 L460.29 201.78 L461.87 204.15 L463.45 204.04 L465.03 204.26 L466.61 204.77 L468.19 204.21 L469.76 204.38 L471.34 202.15 L472.92 201.90 L474.50 204.43 L476.08 204.46 L477.66 204.38 L479.24 204.46 L480.81 204.46 L482.39 204.43 L483.97 201.90 L485.55 201.88 L487.13 202.28 L488.71 204.41 L490.28 204.58 L491.86 204.57 L493.44 204.49 L495.02 204.53 L496.60 204.67 L498.18 205.43 L499.75 204.68 L501.33 204.48 L502.91 204.65 L504.49 205.23 L506.07 204.62 L507.65 204.56 L509.22 202.13 L510.80 204.70 L512.38 204.71 L513.96 204.61 L515.54 204.74 L517.12 204.71 L518.70 204.61 L520.27 204.72 L521.85 202.47 L523.43 204.73 L525.01 204.73 L526.59 204.79 L528.17 205.40 L529.74 204.78 L531.32 204.87 L532.90 204.96 L534.48 202.11 L536.06 202.21 L537.64 204.81 L539.21 202.31 L540.79 204.80 L542.37 202.68 L543.95 204.91 L545.53 204.96 L547.11 204.95 L548.68 204.89 L550.26 205.00 L551.84 204.89 L553.42 204.94 L555.00 205.01 L556.58 205.12 L558.16 205.11 L559.73 205.09 L561.31 202.72 L562.89 205.09 L564.47 205.00 L566.05 205.23 L567.63 205.05 L569.20 205.08 L570.78 202.35 L572.36 202.49 L573.94 202.41 L575.52 205.33 L577.10 205.31 L578.67 205.32 L580.25 205.24 L581.83 205.38 L583.41 205.17 L584.99 205.31 L586.57 205.24 L588.14 205.20 L589.72 205.35 L591.30 205.24 L592.88 205.38 L594.46 205.48 L596.04 205.33 L597.62 203.45 L599.19 205.42 L600.77 205.54 L602.35 205.50 L603.93 206.58 L605.51 205.42 L607.09 205.40 L608.66 205.47 L610.24 205.43 L611.82 203.22 L613.40 206.57 L614.98 205.57 L616.56 203.48 L618.13 205.57 L619.71 205.59 L621.29 205.49 L622.87 203.48 L624.45 205.53 L626.03 205.60 L627.60 205.76 L629.18 205.71 L630.76 205.62 L632.34 205.58 L633.92 205.77 L635.50 203.21 L637.08 202.84 L638.65 205.72 L640.23 205.65 L641.81 206.56 L643.39 205.78 L644.97 205.77 L646.55 206.70 L648.12 205.89 L649.70 204.02 L651.28 205.86 L652.86 205.76 L654.44 205.86 L656.02 205.85 L657.59 205.90 L659.17 205.91 L660.75 205.86 L662.33 203.30 L663.91 205.88 L665.49 206.04 L667.06 206.10 L668.64 205.98 L670.22 203.77 L671.80 206.04 L673.38 206.14 L674.96 206.04 L676.54 206.15 L678.11 206.12 L679.69 206.15 L681.27 206.02 L682.85 206.20 L684.43 206.85 L686.01 203.82 L687.58 206.09 L689.16 206.18 L690.74 206.25 L692.32 206.22 L693.90 203.63 L695.48 206.16 L697.05 206.21 L698.63 203.20 L700.21 203.64 L701.79 206.34 L703.37 206.14 L704.95 206.24 L706.52 206.26 L708.10 206.27 L709.68 206.32 L711.26 203.31 L712.84 206.19 L714.42 207.05 L716.00 204.15 L717.57 206.27 L719.15 206.30 L720.73 206.14 L722.31 206.19 L723.89 203.48 L725.47 204.37 L727.04 206.28 L728.62 206.34 L730.20 206.30 L731.78 206.34 L733.36 206.20 L734.94 206.33 L736.51 206.28 L738.09 206.33 L739.67 207.24 L741.25 206.25 L742.83 206.31 L744.41 206.33 L745.98 206.15 L747.56 207.04 L749.14 203.98 L750.72 206.32 L752.30 206.28 L753.88 207.15 L755.46 206.36 L757.03 206.26 L758.61 206.30 L760.19 207.19 L761.77 204.41 L763.35 204.18 L764.93 206.24 L766.50 206.26 L768.08 206.27 L769.66 206.26 L771.24 206.31 L772.82 206.20 L774.40 206.41 L775.97 204.32 L777.55 206.37 L779.13 204.08 L780.71 206.36 L782.29 206.29 L783.87 206.22 L785.44 206.34 L787.02 206.25 L788.60 206.19 L790.18 206.28 L791.76 206.34 L793.34 206.30 L794.92 206.35 L796.49 207.07 L798.07 206.26 L799.65 203.45 L801.23 207.08 L802.81 206.24 L804.39 206.38 L805.96 206.36 L807.54 206.24 L809.12 206.27 L810.70 206.25 L812.28 204.41 L813.86 204.30 L815.43 206.28 L817.01 206.35 L818.59 206.44 L820.17 206.45 L821.75 206.21 L823.33 206.45 L824.90 206.37 L826.48 206.25 L828.06 206.31 L829.64 206.37 L831.22 206.27 L832.80 206.44 L834.38 206.35 L835.95 206.46 L837.53 203.94 L839.11 206.38 L840.69 206.46 L842.27 206.46 L843.85 206.23 L845.42 206.36 L847.00 207.31 L848.58 206.33 L850.16 203.51 L851.74 206.30 L853.32 206.44 L854.89 206.40 L856.47 203.46 L858.05 206.49 L859.63 206.29 L861.21 206.29 L862.79 206.25 L864.36 202.66 L865.94 204.17 L867.52 202.66 L869.10 206.30" stroke="#edb120" stroke-width="1"/>
<path d="M81.48 197.42h0M83.06 197.31h0M84.64 197.41h0M86.21 197.50h0M87.79 197.40h0M89.37 197.53h0M90.95 197.54h0M92.53 197.40h0M94.11 197.33h0M95.68 197.42h0M97.26 197.55h0M98.84 197.46h0M100.42 197.55h0M102.00 197.59h0M103.58 197.50h0M105.15 197.48h0M106.73 197.49h0M108.31 197.51h0M109.89 197.38h0M111.47 197.43h0M113.05 197.56h0M114.62 197.57h0M116.20 197.46h0M117.78 197.45h0M119.36 197.42h0M120.94 197.67h0M122.52 197.45h0M124.10 197.44h0M125.67 198.90h0M127.25 199.94h0M128.83 198.78h0M130.41 199.67h0M131.99 198.88h0M133.57 198.86h0M135.14 199.04h0M136.72 199.02h0M138.30 199.04h0M139.88 199.04h0M141.46 199.14h0M143.04 196.95h0M144.61 197.08h0M146.19 199.09h0M147.77 199.03h0M149.35 199.08h0M150.93 199.09h0M152.51 199.29h0M154.08 199.32h0M155.66 197.34h0M157.24 197.04h0M158.82 199.24h0M160.40 199.42h0M161.98 199.43h0M163.56 199.36h0M165.13 197.15h0M166.71 199.55h0M168.29 196.63h0M169.87 196.88h0M171.45 196.76h0M173.03 199.49h0M174.60 199.53h0M176.18 199.64h0M177.76 199.61h0M179.34 199.59h0M180.92 199.57h0M182.50 199.60h0M184.07 199.65h0M185.65 199.72h0M187.23 200.83h0M188.81 199.70h0M190.39 199.77h0M191.97 200.40h0M193.54 197.24h0M195.12 197.77h0M196.70 200.05h0M198.28 200.03h0M199.86 199.94h0M201.44 200.05h0M203.02 200.05h0M204.59 199.96h0M206.17 197.36h0M207.75 197.86h0M209.33 200.22h0M210.91 200.23h0M212.49 200.19h0M214.06 200.08h0M215.64 200.33h0M217.22 200.18h0M218.80 197.83h0M220.38 200.39h0M221.96 201.20h0M223.53 200.27h0M225.11 200.20h0M226.69 200.34h0M228.27 200.36h0M229.85 200.42h0M231.43 200.38h0M233.00 198.48h0M234.58 200.31h0M236.16 200.45h0M237.74 200.48h0M239.32 200.39h0M240.90 200.45h0M242.48 200.42h0M244.05 200.59h0M245.63 198.21h0M247.21 200.45h0M248.79 200.67h0M250.37 200.52h0M251.95 201.22h0M253.52 200.66h0M255.10 200.72h0M256.68 200.57h0M258.26 200.67h0M259.84 200.75h0M261.42 200.64h0M262.99 200.63h0M264.57 200.76h0M266.15 200.82h0M267.73 200.76h0M269.31 200.77h0M270.89 198.62h0M272.46 200.74h0M274.04 201.60h0M275.62 200.74h0M277.20 200.87h0M278.78 200.80h0M280.36 200.94h0M281.94 200.81h0M283.51 201.05h0M285.09 200.90h0M286.67 200.94h0M288.25 201.07h0M289.83 201.07h0M291.41 201.05h0M292.98 201.12h0M294.56 201.01h0M296.14 201.04h0M297.72 201.02h0M299.30 201.14h0M300.88 201.18h0M302.45 201.23h0M304.03 202.05h0M305.61 201.13h0M307.19 198.59h0M308.77 201.16h0M310.35 201.29h0M311.92 201.27h0M313.50 199.03h0M315.08 201.36h0M316.66 201.48h0M318.24 202.39h0M319.82 199.12h0M321.40 199.62h0M322.97 201.48h0M324.55 201.57h0M326.13 201.66h0M327.71 201.74h0M329.29 201.60h0M330.87 201.70h0M332.44 198.74h0M334.02 199.38h0M335.60 201.67h0M337.18 201.73h0M338.76 202.60h0M340.34 201.97h0M341.91 201.85h0M343.49 201.87h0M345.07 198.98h0M346.65 199.02h0M348.23 202.12h0M349.81 202.09h0M351.38 202.13h0M352.96 202.15h0M354.54 202.12h0M356.12 202.03h0M357.70 202.28h0M359.28 202.32h0M360.86 202.24h0M362.43 203.05h0M364.01 202.29h0M365.59 202.38h0M367.17 202.41h0M368.75 202.50h0M370.33 199.67h0M371.90 199.50h0M373.48 202.58h0M375.06 202.51h0M376.64 202.53h0M378.22 202.57h0M379.80 202.57h0M381.37 202.63h0M382.95 200.06h0M384.53 200.38h0M386.11 202.64h0M387.69 202.63h0M389.27 202.86h0M390.84 202.77h0M392.42 202.78h0M394.00 202.82h0M395.58 202.95h0M397.16 200.67h0M398.74 202.96h0M400.32 203.90h0M401.89 202.99h0M403.47 203.04h0M405.05 203.00h0M406.63 203.19h0M408.21 200.92h0M409.79 200.15h0M411.36 203.23h0M412.94 203.11h0M414.52 203.34h0M416.10 203.37h0M417.68 203.25h0M419.26 203.43h0M420.83 203.46h0M422.41 203.34h0M423.99 203.45h0M425.57 203.54h0M427.15 203.37h0M428.73 203.52h0M430.30 203.58h0M431.88 203.47h0M433.46 201.35h0M435.04 201.26h0M436.62 203.57h0M438.20 203.62h0M439.78 203.83h0M441.35 203.73h0M442.93 204.68h0M444.51 204.94h0M446.09 201.27h0M447.67 203.82h0M449.25 203.83h0M450.82 203.95h0M452.40 203.91h0M453.98 203.92h0M455.56 204.03h0M457.14 203.95h0M458.72 203.97h0M460.29 201.78h0M461.87 204.15h0M463.45 204.04h0M465.03 204.26h0M466.61 204.77h0M468.19 204.21h0M469.76 204.38h0M471.34 202.15h0M472.92 201.90h0M474.50 204.43h0M476.08 204.46h0M477.66 204.38h0M479.24 204.46h0M480.81 204.46h0M482.39 204.43h0M483.97 201.90h0M485.55 201.88h0M487.13 202.28h0M488.71 204.41h0M490.28 204.58h0M491.86 204.57h0M493.44 204.49h0M495.02 204.53h0M496.60 204.67h0M498.18 205.43h0M499.75 204.68h0M501.33 204.48h0M502.91 204.65h0M504.49 205.23h0M506.07 204.62h0M507.65 204.56h0M509.22 202.13h0M510.80 204.70h0M512.38 204.71h0M513.96 204.61h0M515.54 204.74h0M517.12 204.71h0M518.70 204.61h0M520.27 204.72h0M521.85 202.47h0M523.43 204.73h0M525.01 204.73h0M526.59 204.79h0M528.17 205.40h0M529.74 204.78h0M531.32 204.87h0M532.90 204.96h0M534.48 202.11h0M536.06 202.21h0M537.64 204.81h0M539.21 202.31h0M540.79 204.80h0M542.37 202.68h0M543.95 204.91h0M545.53 204.96h0M547.11 204.95h0M548.68 204.89h0M550.26 205.00h0M551.84 204.89h0M553.42 204.94h0M555.00 205.01h0M556.58 205.12h0M558.16 205.11h0M559.73 205.09h0M561.31 202.72h0M562.89 205.09h0M564.47 205.00h0M566.05 205.23h0M567.63 205.05h0M569.20 205.08h0M570.78 202.35h0M572.36 202.49h0M573.94 202.41h0M575.52 205.33h0M577.10 205.31h0M578.67 205.32h0M580.25 205.24h0M581.83 205.38h0M583.41 205.17h0M584.99 205.31h0M586.57 205.24h0M588.14 205.20h0M589.72 205.35h0M591.30 205.24h0M592.88 205.38h0M594.46 205.48h0M596.04 205.33h0M597.62 203.45h0M599.19 205.42h0M600.77 205.54h0M602.35 205.50h0M603.93 206.58h0M605.51 205.42h0M607.09 205.40h0M608.66 205.47h0M610.24 205.43h0M611.82 203.22h0M613.40 206.57h0M614.98 205.57h0M616.56 203.48h0M618.13 205.57h0M619.71 205.59h0M621.29 205.49h0M622.87 203.48h0M624.45 205.53h0M626.03 205.60h0M627.60 205.76h0M629.18 205.71h0M630.76 205.62h0M632.34 205.58h0M633.92 205.77h0M635.50 203.21h0M637.08 202.84h0M638.65 205.72h0M640.23 205.65h0M641.81 206.56h0M643.39 205.78h0M644.97 205.77h0M646.55 206.70h0M648.12 205.89h0M649.70 204.02h0M651.28 205.86h0M652.86 205.76h0M654.44 205.86h0M656.02 205.85h0M657.59 205.90h0M659.17 205.91h0M660.75 205.86h0M662.33 203.30h0M663.91 205.88h0M665.49 206.04h0M667.06 206.10h0M668.64 205.98h0M670.22 203.77h0M671.80 206.04h0M673.38 206.14h0M674.96 206.04h0M676.54 206.15h0M678.11 206.12h0M679.69 206.15h0M681.27 206.02h0M682.85 206.20h0M684.43 206.85h0M686.01 203.82h0M687.58 206.09h0M689.16 206.18h0M690.74 206.25h0M692.32 206.22h0M693.90 203.63h0M695.48 206.16h0M697.05 206.21h0M698.63 203.20h0M700.21 203.64h0M701.79 206.34h0M703.37 206.14h0M704.95 206.24h0M706.52 206.26h0M708.10 206.27h0M709.68 206.32h0M711.26 203.31h0M712.84 206.19h0M714.42 207.05h0M716.00 204.15h0M717.57 206.27h0M719.15 206.30h0M720.73 206.14h0M722.31 206.19h0M723.89 203.48h0M725.47 204.37h0M727.04 206.28h0M728.62 206.34h0M730.20 206.30h0M731.78 206.34h0M733.36 206.20h0M734.94 206.33h0M736.51 206.28h0M738.09 206.33h0M739.67 207.24h0M741.25 206.25h0M742.83 206.31h0M744.41 206.33h0M745.98 206.15h0M747.56 207.04h0M749.14 203.98h0M750.72 206.32h0M752.30 206.28h0M753.88 207.15h0M755.46 206.36h0M757.03 206.26h0M758.61 206.30h0M760.19 207.19h0M761.77 204.41h0M763.35 204.18h0M764.93 206.24h0M766.50 206.26h0M768.08 206.27h0M769.66 206.26h0M771.24 206.31h0M772.82 206.20h0M774.40 206.41h0M775.97 204.32h0M777.55 206.37h0M779.13 204.08h0M780.71 206.36h0M782.29 206.29h0M783.87 206.22h0M785.44 206.34h0M787.02 206.25h0M788.60 206.19h0M790.18 206.28h0M791.76 206.34h0M793.34 206.30h0M794.92 206.35h0M796.49 207.07h0M798.07 206.26h0M799.65 203.45h0M801.23 207.08h0M802.81 206.24h0M804.39 206.38h0M805.96 206.36h0M807.54 206.24h0M809.12 206.27h0M810.70 206.25h0M812.28 204.41h0M813.86 204.30h0M815.43 206.28h0M817.01 206.35h0M818.59 206.44h0M820.17 206.45h0M821.75 206.21h0M823.33 206.45h0M824.90 206.37h0M826.48 206.25h0M828.06 206.31h0M829.64 206.37h0M831.22 206.27h0M832.80 206.44h0M834.38 206.35h0M835.95 206.46h0M837.53 203.94h0M839.11 206.38h0M840.69 206.46h0M842.27 206.46h0M843.85 206.23h0M845.42 206.36h0M847.00 207.31h0M848.58 206.33h0M850.16 203.51h0M851.74 206.30h0M853.32 206.44h0M854.89 206.40h0M856.47 203.46h0M858.05 206.49h0M859.63 206.29h0M861.21 206.29h0M862.79 206.25h0M864.36 202.66h0M865.94 204.17h0M867.52 202.66h0M869.10 206.30h0" stroke="#edb120" stroke-width="2.8" stroke-linecap="round"/>
</g>
</svg>
<div class="a" style="right:1126px;top:128.0px;font-size:12px;line-height:14px;color:#3c3c3c">2000</div>
<div class="a" style="right:1126px;top:189.9px;font-size:12px;line-height:14px;color:#3c3c3c">0</div>
<div class="a" style="right:1126px;top:251.8px;font-size:12px;line-height:14px;color:#3c3c3c">-2000</div>
<div class="a" style="right:1126px;top:313.7px;font-size:12px;line-height:14px;color:#3c3c3c">-4000</div>
<div class="a" style="right:1126px;top:375.6px;font-size:12px;line-height:14px;color:#3c3c3c">-6000</div>
<div class="a" style="right:1126px;top:437.5px;font-size:12px;line-height:14px;color:#3c3c3c">-8000</div>
<div class="a" style="right:1126px;top:499.4px;font-size:12px;line-height:14px;color:#3c3c3c">-10000</div>
<div class="a" style="right:1126px;top:561.3px;font-size:12px;line-height:14px;color:#3c3c3c">-12000</div>
<div class="a" style="right:1126px;top:623.2px;font-size:12px;line-height:14px;color:#3c3c3c">-14000</div>
<div class="a" style="right:1126px;top:685.1px;font-size:12px;line-height:14px;color:#3c3c3c">-16000</div>
<div class="a" style="right:1126px;top:747.0px;font-size:12px;line-height:14px;color:#3c3c3c">-18000</div>
<div class="a" style="left:50.5px;width:60px;text-align:center;top:759px;font-size:12px;line-height:14px;color:#3c3c3c">0</div>
<div class="a" style="left:129.4px;width:60px;text-align:center;top:759px;font-size:12px;line-height:14px;color:#3c3c3c">50</div>
<div class="a" style="left:208.3px;width:60px;text-align:center;top:759px;font-size:12px;line-height:14px;color:#3c3c3c">100</div>
<div class="a" style="left:287.3px;width:60px;text-align:center;top:759px;font-size:12px;line-height:14px;color:#3c3c3c">150</div>
<div class="a" style="left:366.2px;width:60px;text-align:center;top:759px;font-size:12px;line-height:14px;color:#3c3c3c">200</div>
<div class="a" style="left:445.1px;width:60px;text-align:center;top:759px;font-size:12px;line-height:14px;color:#3c3c3c">250</div>
<div class="a" style="left:524.0px;width:60px;text-align:center;top:759px;font-size:12px;line-height:14px;color:#3c3c3c">300</div>
<div class="a" style="left:602.9px;width:60px;text-align:center;top:759px;font-size:12px;line-height:14px;color:#3c3c3c">350</div>
<div class="a" style="left:681.9px;width:60px;text-align:center;top:759px;font-size:12px;line-height:14px;color:#3c3c3c">400</div>
<div class="a" style="left:760.8px;width:60px;text-align:center;top:759px;font-size:12px;line-height:14px;color:#3c3c3c">450</div>
<div class="a" style="left:839.7px;width:60px;text-align:center;top:759px;font-size:12px;line-height:14px;color:#3c3c3c">500</div>
<div class="a" style="left:320px;width:312px;text-align:center;top:118px;font-size:13.2px;line-height:15px;font-weight:bold;color:#303030">Episode reward for rlACCMdl with rlDDPGAgent</div>
<div class="a" style="left:426px;width:100px;text-align:center;top:773px;font-size:13px;line-height:15px;color:#262626">Episode Number</div>
<div class="a" style="left:-22px;width:100px;text-align:center;top:438px;font-size:13px;line-height:15px;color:#262626;transform:rotate(-90deg)">Episode Reward</div>

<!-- right panel -->
<div class="a" style="left:901px;top:59px;width:300px;height:22px;background:#003d72"></div>
<div class="a" style="left:907px;top:63px;font-size:13px;line-height:15px;color:#fff;-webkit-text-stroke:0.3px #fff">Training Progress</div>
<div class="a" style="left:1182px;top:65px;width:2px;height:2px;background:#fff"></div>
<div class="a" style="left:1182px;top:69px;width:2px;height:2px;background:#fff"></div>
<div class="a" style="left:1182px;top:73px;width:2px;height:2px;background:#fff"></div>
<div class="a" style="left:901px;top:81px;width:300px;height:727px;background:#f5f5f5"></div>

<div class="a" style="left:911px;top:97px;width:160px;height:15px;background:#2a8ad9"></div>
<div class="a" style="left:1081px;top:92px;width:110px;height:25px;border:1px solid #cbcbcb;border-radius:5px;background:#f5f5f5"></div>
<div class="a" style="left:1092px;top:97px;font-size:12px;line-height:14px;color:#a6a6a6">Training stopped</div>

<div class="lbl" style="left:911px;top:128px">Episode number:</div>
<div class="lbl" style="left:1041px;top:128px">500/500</div>
<div class="lbl" style="left:911px;top:153px">Start time:</div>
<div class="lbl" style="left:1041px;top:153px">06-Mar-2024 09:44:03</div>
<div class="lbl" style="left:911px;top:178px">Duration:</div>
<div class="lbl" style="left:1041px;top:178px">00:47:15</div>
<div class="lbl" style="left:911px;top:203px">Final result:</div>
<div class="lbl" style="left:1041px;top:202px;line-height:14.8px">Training finished with<br>maximum number of<br>episodes.</div>

<!-- Training information -->
<div class="a" style="left:911px;top:258px;width:280px;height:270px;border:1px solid #8a8a8a"></div>
<div class="a" style="left:912px;top:278px;width:278px;height:1px;background:#8a8a8a"></div>
<div class="a" style="left:916px;top:261px;font-size:12px;line-height:14px;font-weight:bold;color:#212121">Training Information</div>
<div class="a" style="left:922px;top:289px;width:258px;height:95px;border:1px solid #8a8a8a;background:#fff"></div>
<div class="a" style="left:923px;top:290px;width:256px;height:26px;background:#f5f5f5"></div>
<div class="a" style="left:923px;top:316px;width:256px;height:1px;background:#8a8a8a"></div>
<div class="a" style="left:923px;top:317px;width:256px;height:23px;background:#2a8ad9"></div>
<div class="a" style="left:923px;top:339px;width:256px;height:1px;background:#8a8a8a"></div>
<div class="a" style="left:1051px;top:290px;width:1px;height:50px;background:#8a8a8a"></div>
<div class="a" style="left:926px;top:297px;font-size:12px;line-height:14px;font-weight:bold">Agent</div>
<div class="a" style="left:1055px;top:297px;font-size:12px;line-height:14px;font-weight:bold">Status</div>
<div class="a" style="left:926px;top:320px;font-size:12px;line-height:14px;color:#fff">rlDDPGAgent</div>
<div class="a" style="left:1055px;top:320px;font-size:12px;line-height:14px;color:#fff">Training finished</div>

<div class="a" style="left:922px;top:395px;font-size:12px;line-height:14px;font-weight:bold">Episode Information (rlDDPGAgent):</div>
<div class="lbl" style="left:922px;top:420px">Episode reward:</div>
<div class="lbl" style="left:1042px;top:420px">-40.0282</div>
<div class="lbl" style="left:922px;top:445px">Average reward:</div>
<div class="lbl" style="left:1042px;top:445px">-154.8386</div>
<div class="lbl" style="left:922px;top:470px">Episode Q0:</div>
<div class="lbl" style="left:1042px;top:470px">-307.9883</div>
<div class="a" style="left:1070px;top:494px;width:110px;height:23px;border:1px solid #7a7a7a;border-radius:5px;background:#f5f5f5"></div>
<div class="lbl" style="left:1086px;top:498px">More Details...</div>

<!-- Plot options -->
<div class="a" style="left:911px;top:538px;width:280px;height:90px;border:1px solid #8a8a8a"></div>
<div class="a" style="left:912px;top:558px;width:278px;height:1px;background:#8a8a8a"></div>
<div class="a" style="left:916px;top:541px;font-size:12px;line-height:14px;font-weight:bold">Plot Options</div>
<div class="a" style="left:922px;top:569px;width:14px;height:14px;border:1px solid #444;background:#fff"></div>
<svg class="a" style="left:922px;top:569px" width="14" height="14" viewBox="0 0 14 14"><path d="M3 7.2L5.6 10L11 3.5" stroke="#222" stroke-width="2" fill="none"/></svg>
<div class="lbl" style="left:939px;top:569px">Show EpisodeQ0</div>
<div class="a" style="left:922px;top:598px;width:14px;height:14px;border:1px solid #444;background:#fff"></div>
<div class="lbl" style="left:939px;top:598px">Show last N episodes</div>
<div class="a" style="left:1066px;top:595px;width:114px;height:22px;border:1px solid #d8d8d8;background:#f5f5f5"></div>
<div class="lbl" style="left:1155px;top:598px;color:#a8a8a8">100</div>

<!-- Legend -->
<div class="a" style="left:911px;top:638px;width:280px;height:67px;border:1px solid #8a8a8a"></div>
<div class="a" style="left:917px;top:644px;width:268px;height:55px;background:#fff"></div>
<div class="a" style="left:929px;top:658px;width:40px;height:1px;background:#4dbeee"></div>
<div class="a" style="left:948px;top:657px;width:3px;height:3px;border-radius:50%;background:#4dbeee"></div>
<div class="lbl" style="left:973px;top:651px">Episode reward</div>
<div class="a" style="left:1065px;top:658px;width:40px;height:1px;background:#edb120"></div>
<div class="a" style="left:1084px;top:657px;width:3px;height:3px;border-radius:50%;background:#edb120"></div>
<div class="lbl" style="left:1109px;top:651px">Episode Q0</div>
<div class="a" style="left:929px;top:672px;width:40px;height:1px;background:#0072bd"></div>
<div class="a" style="left:948px;top:671px;width:3px;height:3px;border-radius:50%;background:#0072bd"></div>
<div class="lbl" style="left:973px;top:666px">Average reward</div>

<!-- status bar -->
<div class="a" style="left:1px;top:808px;width:1200px;height:1px;background:#a4a4a4"></div>
<div class="a" style="left:1px;top:809px;width:1200px;height:22px;background:#e6e6e6"></div>
<div class="a" style="left:900px;top:808px;width:1px;height:23px;background:#8c8c8c"></div>
<svg class="a" style="left:1185px;top:814px" width="11" height="13" viewBox="0 0 11 13"><polygon points="1,0 7.5,6 1,12" fill="#999"/><rect x="8" y="0" width="2" height="12" fill="#999"/></svg>
<div class="a" style="left:0;top:831px;width:1202px;height:1px;background:#a0a0a0"></div>
<div class="a" style="left:0;top:822px;width:8px;height:10px;background:#c4c4c4"></div>
<div class="a" style="left:0;top:809px;width:12px;height:23px;border-left:1px solid #8a8a8a;border-bottom:1px solid #a0a0a0;border-bottom-left-radius:8px;background:#e6e6e6"></div>
<div class="a" style="left:530px;top:831px;width:118px;height:1px;background:repeating-linear-gradient(90deg,#2a2a2a 0 7px,#888 7px 9px)"></div>
<div class="a" style="left:683px;top:831px;width:127px;height:1px;background:repeating-linear-gradient(90deg,#2a2a2a 0 7px,#888 7px 9px)"></div>
<div class="a" style="left:848px;top:831px;width:132px;height:1px;background:repeating-linear-gradient(90deg,#2a2a2a 0 7px,#888 7px 9px)"></div>
<div class="a" style="left:1017px;top:831px;width:120px;height:1px;background:repeating-linear-gradient(90deg,#2a2a2a 0 7px,#888 7px 9px)"></div>
<div class="a" style="left:1183px;top:831px;width:18px;height:1px;background:#3a3a3a"></div>
</body></html>
